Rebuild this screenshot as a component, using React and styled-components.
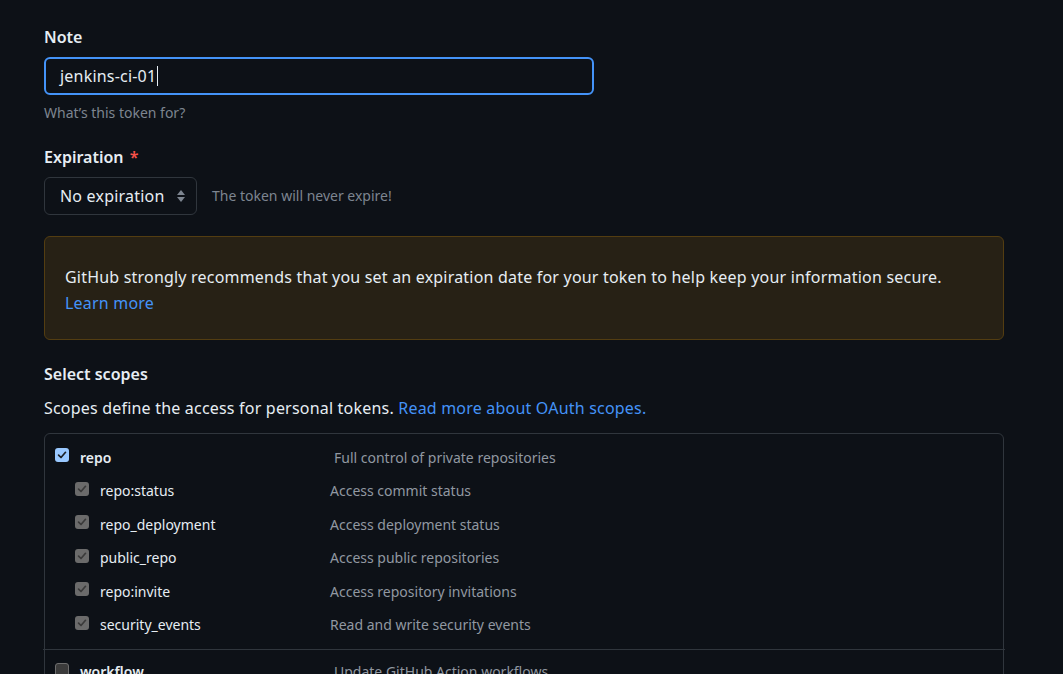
import React from 'react'
import styled, { createGlobalStyle } from 'styled-components'

const GlobalStyle = createGlobalStyle`
  body {
    margin: 0;
    background: #0d1117;
    color: #e6edf3;
    font-family: "Noto Sans", "Liberation Sans", Arial, sans-serif;
  }
`

const Page = styled.div`
  padding: 27px 0 0 44px;
  box-sizing: border-box;
  overflow: hidden;
  height: 674px;
`

const Form = styled.div`
  width: 960px;
  display: flex;
  flex-direction: column;
`

const Label = styled.div`
  font-size: 16px;
  font-weight: 600;
  line-height: 20px;
  color: #e6edf3;
  margin-top: ${p => p.$top || 0}px;
  span {
    color: #f85149;
    margin-left: 2px;
  }
`

const NoteField = styled.div`
  margin-top: 10px;
  width: 550px;
  height: 38px;
  box-sizing: border-box;
  border: 2px solid #4493f8;
  border-radius: 6px;
  padding: 0 14px;
  display: flex;
  align-items: center;
  font-size: 16px;
  letter-spacing: 0.2px;
  color: #e6edf3;
`

const Caret = styled.span`
  display: inline-block;
  width: 1px;
  height: 20px;
  background: #e6edf3;
  margin-left: 1px;
`

const Hint = styled.div`
  font-size: 14px;
  line-height: 20px;
  color: #7d8590;
  margin-top: ${p => p.$top || 0}px;
`

const ExpirationRow = styled.div`
  margin-top: 10px;
  display: flex;
  align-items: center;
  gap: 15px;
`

const Select = styled.div`
  width: 153px;
  height: 38px;
  box-sizing: border-box;
  border: 1px solid #30363d;
  border-radius: 6px;
  padding: 0 10px 0 15px;
  display: flex;
  align-items: center;
  justify-content: space-between;
  font-size: 16px;
  letter-spacing: 0.2px;
  color: #e6edf3;
`

const Flash = styled.div`
  margin-top: 21px;
  background: #272115;
  border: 1px solid #533d11;
  border-radius: 6px;
  padding: 27px 20px 23px;
  font-size: 16px;
  line-height: 26px;
  letter-spacing: 0.2px;
  color: #e6edf3;
`

const Link = styled.a`
  color: #4493f8;
  text-decoration: none;
`

const Para = styled.div`
  margin-top: 12px;
  font-size: 16px;
  line-height: 24px;
  letter-spacing: 0.2px;
  color: #e6edf3;
`

const ScopeBox = styled.div`
  margin-top: 13px;
  border: 1px solid #30363d;
  border-radius: 6px;
`

const Group = styled.div`
  padding: ${p => p.$pad};
  border-top: ${p => (p.$divider ? '1px solid #30363d' : 'none')};
  margin: ${p => (p.$divider ? '0 -2px' : '0')};
  padding-left: ${p => (p.$divider ? '12px' : '10px')};
`

const Row = styled.div`
  display: flex;
  align-items: center;
  height: ${p => (p.$child ? '33.5px' : '34px')};
  padding-left: ${p => (p.$child ? '20px' : '0')};
  font-size: 14px;
`

const Name = styled.div`
  width: ${p => (p.$child ? '230px' : '254px')};
  font-weight: ${p => (p.$child ? 400 : 600)};
  color: #e6edf3;
  margin-left: 11px;
`

const Desc = styled.div`
  color: #9198a1;
`

const Box = styled.div`
  width: 14px;
  height: 14px;
  box-sizing: border-box;
  border-radius: 3px;
  display: flex;
  align-items: center;
  justify-content: center;
  background: ${p => (p.$variant === 'on' ? '#99c8ff' : p.$variant === 'disabled' ? '#6b6b6b' : '#3b3b3b')};
  border: ${p => (p.$variant === 'off' ? '1px solid #6e6e6e' : 'none')};
  margin-top: -4px;
`

const Check = ({ variant }) => (
  <Box $variant={variant}>
    {variant !== 'off' && (
      <svg width="10" height="10" viewBox="0 0 10 10">
        <path
          d="M1.6 5.2 L4 7.5 L8.5 2.3"
          fill="none"
          stroke={variant === 'on' ? '#1b1f24' : '#3a3a3a'}
          strokeWidth="1.7"
          strokeLinecap="round"
          strokeLinejoin="round"
        />
      </svg>
    )}
  </Box>
)

const Arrows = () => (
  <svg width="10" height="16" viewBox="0 0 10 16">
    <path d="M5 2 L9 7 H1 Z" fill="#7d8590" />
    <path d="M5 14 L9 9 H1 Z" fill="#7d8590" />
  </svg>
)

const children = [
  ['repo:status', 'Access commit status'],
  ['repo_deployment', 'Access deployment status'],
  ['public_repo', 'Access public repositories'],
  ['repo:invite', 'Access repository invitations'],
  ['security_events', 'Read and write security events'],
]

export default function App() {
  return (
    <Page>
      <GlobalStyle />
      <Form>
        <Label>Note</Label>
        <NoteField>
          jenkins-ci-01
          <Caret />
        </NoteField>
        <Hint $top={8}>What’s this token for?</Hint>

        <Label $top={24}>
          Expiration <span>*</span>
        </Label>
        <ExpirationRow>
          <Select>
            No expiration
            <Arrows />
          </Select>
          <Hint>The token will never expire!</Hint>
        </ExpirationRow>

        <Flash>
          GitHub strongly recommends that you set an expiration date for your token to help keep your information secure.
          <br />
          <Link href="#">Learn more</Link>
        </Flash>

        <Label $top={24}>Select scopes</Label>
        <Para>
          Scopes define the access for personal tokens. <Link href="#">Read more about OAuth scopes.</Link>
        </Para>

        <ScopeBox>
          <Group $pad="6px 0 7px">
            <Row>
              <Check variant="on" />
              <Name>repo</Name>
              <Desc>Full control of private repositories</Desc>
            </Row>
            {children.map(([name, desc]) => (
              <Row $child key={name}>
                <Check variant="disabled" />
                <Name $child>{name}</Name>
                <Desc>{desc}</Desc>
              </Row>
            ))}
          </Group>
          <Group $divider $pad="5px 0 7px">
            <Row>
              <Check variant="off" />
              <Name>workflow</Name>
              <Desc>Update GitHub Action workflows</Desc>
            </Row>
          </Group>
        </ScopeBox>
      </Form>
    </Page>
  )
}
